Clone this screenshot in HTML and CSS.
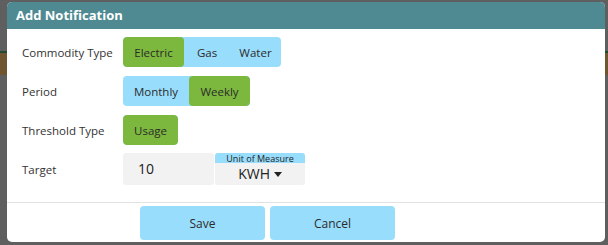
FILE: index.html
```html
<!DOCTYPE html>
<html lang="en">
<head>
    <meta charset="UTF-8">
    <title>Add Notification</title>
    <link rel="stylesheet" href="styles.css">
</head>
<body>
    <!-- page behind the overlay -->
    <div class="backdrop-strip"></div>

    <div class="modal">
        <div class="modal-header">Add Notification</div>

        <div class="modal-body">
            <div class="form-row">
                <label>Commodity Type</label>
                <div class="toggle-group">
                    <button class="toggle active w-electric">Electric</button>
                    <button class="toggle w-gas">Gas</button>
                    <button class="toggle w-water">Water</button>
                </div>
            </div>

            <div class="form-row">
                <label>Period</label>
                <div class="toggle-group">
                    <button class="toggle w-monthly">Monthly</button>
                    <button class="toggle active w-weekly">Weekly</button>
                </div>
            </div>

            <div class="form-row">
                <label>Threshold Type</label>
                <div class="toggle-group">
                    <button class="toggle active w-usage">Usage</button>
                </div>
            </div>

            <div class="form-row target-row">
                <label>Target</label>
                <div class="target-input">10</div>
                <div class="unit-box">
                    <div class="unit-label">Unit of Measure</div>
                    <div class="unit-value">KWH <span class="caret"></span></div>
                </div>
            </div>
        </div>

        <div class="modal-footer">
            <button class="footer-btn">Save</button>
            <button class="footer-btn">Cancel</button>
        </div>
    </div>
</body>
</html>
```

FILE: styles.css
```css
body {
    margin: 0;
    padding: 2px 0 0 7px;
    background: #5f5f5f;
    font-family: 'Open Sans', 'Liberation Sans', sans-serif;
    height: 245px;
    box-sizing: border-box;
    overflow: hidden;
    position: relative;
}

/* page content showing through the overlay */
.backdrop-strip {
    position: absolute;
    left: 0;
    right: 0;
    top: 51px;
    height: 22px;
    border-top: 2px solid #1f4a2c;
    background: #6f5631;
}

.modal {
    position: relative;
    width: 598px;
    height: 240px;
    background: white;
    border-radius: 5px;
    overflow: hidden;
    display: flex;
    flex-direction: column;
}

.modal-header {
    background: #4f8a92;
    color: white;
    font-weight: bold;
    font-size: 13px;
    height: 27px;
    line-height: 26px;
    padding-left: 9px;
}

.modal-body {
    padding: 8px 0 0 15px;
    flex: 1;
}

.form-row {
    display: flex;
    align-items: center;
    height: 30px;
    margin-bottom: 9px;
}

.form-row label {
    width: 101px;
    font-size: 11.5px;
    color: #333;
}

.toggle-group {
    display: flex;
    background: #99ddfc;
    border-radius: 4px;
    overflow: hidden;
    height: 30px;
}

.toggle {
    border: none;
    background: transparent;
    font-family: inherit;
    font-size: 11.5px;
    color: #2b2b2b;
    padding: 0;
    height: 30px;
    cursor: pointer;
}

.w-electric { width: 61px; }
.w-gas { width: 46px; }
.w-water { width: 51px; }
.w-monthly { width: 66px; }
.w-weekly { width: 61px; }
.w-usage { width: 55px; }

.toggle.active {
    background: #7cb83e;
    border-radius: 4px;
}

.target-row {
    height: 32px;
    margin-top: -1px;
}

.target-input {
    width: 76px;
    height: 32px;
    line-height: 32px;
    padding-left: 15px;
    background: #f2f2f2;
    border-radius: 3px;
    font-size: 14px;
    color: #222;
}

.unit-box {
    width: 90px;
    height: 32px;
    margin-left: 1px;
    background: #f2f2f2;
    border-radius: 3px;
    overflow: hidden;
    text-align: center;
}

.unit-label {
    background: #99ddfc;
    font-size: 9px;
    height: 10px;
    line-height: 11px;
    color: #222;
}

.unit-value {
    font-size: 14px;
    line-height: 21px;
    color: #222;
}

.caret {
    display: inline-block;
    width: 0;
    height: 0;
    border-left: 4px solid transparent;
    border-right: 4px solid transparent;
    border-top: 5px solid #222;
    vertical-align: middle;
    margin-top: -2px;
}

.modal-footer {
    border-top: 1px solid #e2e2e2;
    height: 40px;
    padding: 3px 0 0 133px;
    box-sizing: border-box;
    display: flex;
    gap: 5px;
}

.footer-btn {
    width: 125px;
    height: 34px;
    border: none;
    border-radius: 4px;
    background: #99ddfc;
    font-family: inherit;
    font-size: 12px;
    color: #2b2b2b;
    cursor: pointer;
}
```
